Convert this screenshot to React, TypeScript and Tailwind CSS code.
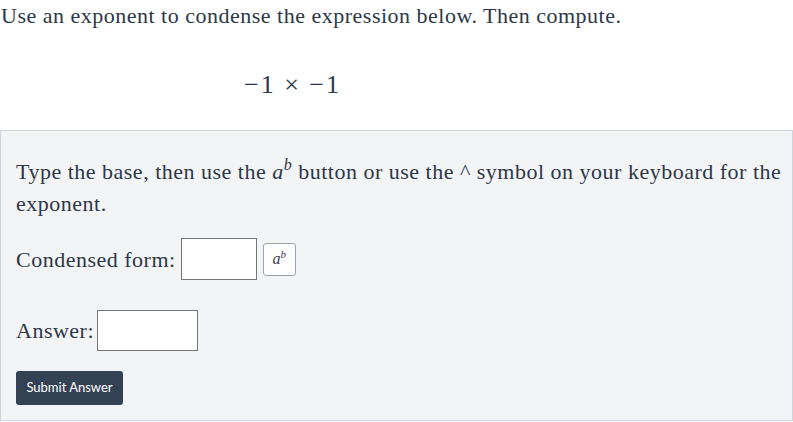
import React from 'react';

const serif = { fontFamily: '"Liberation Serif", "DejaVu Serif", serif' };

const App = () => {
  return (
    <div className="w-[793px] h-[422px] bg-white text-[#2d3748] overflow-hidden tracking-[0.5px]" style={serif}>
      {/* Prompt */}
      <p className="text-[22px] leading-[32px] pl-[1px]">
        Use an exponent to condense the expression below. Then compute.
      </p>

      {/* Expression */}
      <div className="flex justify-center pr-[208px] pt-[37px] h-[98px]">
        <span className="text-[26px] leading-[32px] tracking-[2px] whitespace-pre">−1 × −1</span>
      </div>

      {/* Answer panel */}
      <div className="w-[793px] h-[291px] bg-[#f3f4f6] border border-[#d1d5db] pl-[15px] pr-[2px] pt-[25px]">
        <p className="text-[22px] leading-[32px]">
          Type the base, then use the <i>a</i>
          <sup className="italic text-[16px] leading-none relative top-[-9px] align-baseline">b</sup> button or use the ^ symbol on your keyboard for the exponent.
        </p>

        <div className="flex items-center mt-[18px]">
          <span className="text-[22px]">Condensed form:</span>
          <div className="ml-[5px] w-[76px] h-[42px] bg-white border border-[#767676]"></div>
          <button className="ml-[6px] w-[33px] h-[33px] bg-white border border-[#9ca3af] rounded-[3px] text-[16px] italic leading-none tracking-normal text-[#374151]">
            a<sup className="text-[11px] leading-none relative top-[-6px] align-baseline">b</sup>
          </button>
        </div>

        <div className="flex items-center mt-[30px]">
          <span className="text-[22px]">Answer:</span>
          <div className="ml-[3px] w-[101px] h-[41px] bg-white border border-[#767676]"></div>
        </div>

        <button
          className="mt-[20px] w-[107px] h-[34px] bg-[#334155] text-white rounded-[3px] text-[13px] tracking-normal"
          style={{ fontFamily: 'Lato, "Liberation Sans", sans-serif' }}
        >
          Submit Answer
        </button>
      </div>
    </div>
  );
};

export default App;
